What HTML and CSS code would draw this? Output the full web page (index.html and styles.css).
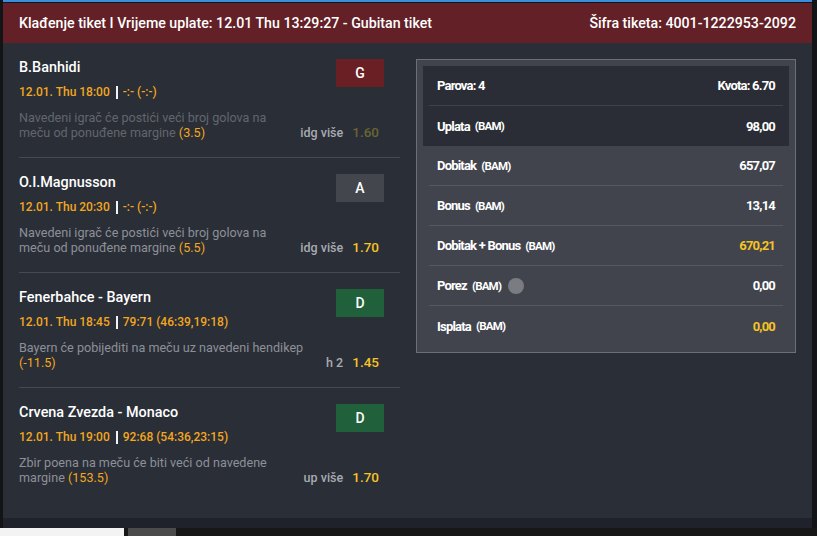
FILE: index.html
```html
<!DOCTYPE html>
<html lang="bs">
<head>
<meta charset="utf-8">
<title>Klađenje tiket</title>
<link rel="stylesheet" href="styles.css">
</head>
<body>
<div class="frame">
  <div class="top-line"></div>
  <div class="window">
    <header class="ticket-header">
      <span>Klađenje tiket I Vrijeme uplate: 12.01 Thu 13:29:27 - Gubitan tiket</span>
      <span>Šifra tiketa: 4001-1222953-2092</span>
    </header>
    <main class="ticket-body">
      <section class="events">
        <div class="item item-dim">
          <div class="item-info">
            <div class="name">B.Banhidi</div>
            <div class="meta">12.01. Thu 18:00<span class="bar"></span>-:- (-:-)</div>
            <div class="desc">Navedeni igrač će postići veći broj golova na meču od ponuđene margine <span class="hl">(3.5)</span></div>
          </div>
          <div class="item-side">
            <div class="pick pick-red">G</div>
            <div class="odds-row"><span class="market">idg više</span><span class="odd">1.60</span></div>
          </div>
        </div>
        <div class="item">
          <div class="item-info">
            <div class="name">O.I.Magnusson</div>
            <div class="meta">12.01. Thu 20:30<span class="bar"></span>-:- (-:-)</div>
            <div class="desc">Navedeni igrač će postići veći broj golova na meču od ponuđene margine <span class="hl">(5.5)</span></div>
          </div>
          <div class="item-side">
            <div class="pick pick-grey">A</div>
            <div class="odds-row"><span class="market">idg više</span><span class="odd">1.70</span></div>
          </div>
        </div>
        <div class="item">
          <div class="item-info">
            <div class="name">Fenerbahce - Bayern</div>
            <div class="meta">12.01. Thu 18:45<span class="bar"></span>79:71 (46:39,19:18)</div>
            <div class="desc">Bayern će pobijediti na meču uz navedeni hendikep <span class="hl">(-11.5)</span></div>
          </div>
          <div class="item-side">
            <div class="pick pick-green">D</div>
            <div class="odds-row"><span class="market">h 2</span><span class="odd">1.45</span></div>
          </div>
        </div>
        <div class="item">
          <div class="item-info">
            <div class="name">Crvena Zvezda - Monaco</div>
            <div class="meta">12.01. Thu 19:00<span class="bar"></span>92:68 (54:36,23:15)</div>
            <div class="desc">Zbir poena na meču će biti veći od navedene margine <span class="hl">(153.5)</span></div>
          </div>
          <div class="item-side">
            <div class="pick pick-green">D</div>
            <div class="odds-row"><span class="market">up više</span><span class="odd">1.70</span></div>
          </div>
        </div>
      </section>
      <aside class="summary">
        <div class="summary-top">
          <div class="row"><span class="label">Parova: 4</span><span class="value">Kvota: 6.70</span></div>
          <div class="row"><span class="label">Uplata <small>(BAM)</small></span><span class="value">98,00</span></div>
        </div>
        <div class="row"><span class="label">Dobitak <small>(BAM)</small></span><span class="value">657,07</span></div>
        <div class="row"><span class="label">Bonus <small>(BAM)</small></span><span class="value">13,14</span></div>
        <div class="row"><span class="label">Dobitak + Bonus <small>(BAM)</small></span><span class="value value-hl">670,21</span></div>
        <div class="row"><span class="label">Porez <small>(BAM)</small><span class="info-dot"></span></span><span class="value">0,00</span></div>
        <div class="row"><span class="label">Isplata <small>(BAM)</small></span><span class="value value-hl">0,00</span></div>
      </aside>
    </main>
    <div class="bottom-strip"></div>
  </div>
  <div class="bottom-bar">
    <div class="tab-white"></div>
    <div class="tab-grey"></div>
  </div>
</div>
</body>
</html>
```
FILE: styles.css
```css
html, body {
  margin: 0;
  padding: 0;
  background: #121417;
}
body {
  font-family: Roboto, "Liberation Sans", sans-serif;
  color: #fff;
}
.frame {
  width: 817px;
  height: 536px;
  display: flex;
  flex-direction: column;
  overflow: hidden;
}
.top-line {
  margin-left: 3px;
  width: 809px;
  height: 2px;
  background: #3a8fdc;
  margin-bottom: 1px;
}
.window {
  margin-left: 3px;
  width: 809px;
  background: #2a2e37;
}
.ticket-header {
  height: 40px;
  background: #632026;
  display: flex;
  justify-content: space-between;
  align-items: center;
  padding: 0 16px;
  font-size: 14.2px;
  font-weight: 500;
  color: #fff;
}
.ticket-body {
  height: 475px;
  display: grid;
  grid-template-columns: 1fr 380px;
  column-gap: 16px;
  padding: 0 16px;
  align-items: start;
}
.item {
  display: flex;
  gap: 16px;
  padding: 16px 16px 17px 0;
  border-bottom: 1px solid #454952;
}
.item:last-child {
  border-bottom: none;
}
.item-info {
  flex: 1;
  min-width: 0;
}
.name {
  font-size: 14.4px;
  line-height: 18px;
  font-weight: 500;
  color: #fff;
}
.meta {
  margin-top: 7px;
  font-size: 12px;
  line-height: 16px;
  font-weight: 500;
  color: #f2a71e;
  display: flex;
  align-items: center;
}
.bar {
  display: inline-block;
  width: 2px;
  height: 13px;
  background: #f2f2f2;
  margin: 0 5px 0 6px;
}
.desc {
  margin-top: 10px;
  font-size: 12.6px;
  line-height: 15px;
  color: #8d9097;
}
.item-dim .desc {
  color: #62666d;
}
.hl {
  color: #f2a71e;
}
.item-side {
  display: flex;
  flex-direction: column;
  justify-content: space-between;
  align-items: flex-end;
}
.pick {
  width: 48px;
  height: 28px;
  display: flex;
  align-items: center;
  justify-content: center;
  font-size: 14px;
  font-weight: 500;
  color: #fff;
}
.pick-red { background: #6a1f24; }
.pick-grey { background: #43464d; }
.pick-green { background: #20603b; }
.odds-row {
  display: flex;
  align-items: baseline;
  gap: 9px;
  margin-right: 5px;
  line-height: 15px;
  white-space: nowrap;
}
.market {
  font-size: 12.5px;
  font-weight: 500;
  color: #a8abb0;
}
.odd {
  font-size: 13.5px;
  font-weight: 500;
  color: #f7c325;
}
.item-dim .odd {
  color: #6b6433;
}
.summary {
  margin-top: 16px;
  border: 1px solid #6c6f77;
  background: #41444d;
  padding: 6px;
  font-family: Roboto, "Liberation Sans", sans-serif;
  font-weight: 700;
  font-size: 13px;
  letter-spacing: -0.8px;
  color: #fff;
}
.summary-top {
  background: #2a2d35;
}
.row {
  box-sizing: border-box;
  height: 40px;
  margin: 0 6px;
  padding: 0 8px;
  display: flex;
  justify-content: space-between;
  align-items: center;
  border-bottom: 1px solid #55585f;
}
.summary-top .row {
  border-bottom-color: #3f424a;
}
.row:last-child {
  border-bottom: none;
}
.label {
  display: flex;
  align-items: center;
}
.label small {
  font-size: 11.5px;
  margin-left: 5px;
}
.info-dot {
  display: inline-block;
  width: 16px;
  height: 16px;
  border-radius: 50%;
  background: #7b7c82;
  margin-left: 7px;
}
.value-hl {
  color: #f5c325;
}
.bottom-strip {
  height: 10px;
  background: #1f222a;
}
.bottom-bar {
  height: 8px;
  background: #171717;
  display: flex;
  gap: 4px;
}
.tab-white {
  width: 124px;
  background: #f3f3f3;
}
.tab-grey {
  width: 48px;
  background: #4b4b4b;
}
```
